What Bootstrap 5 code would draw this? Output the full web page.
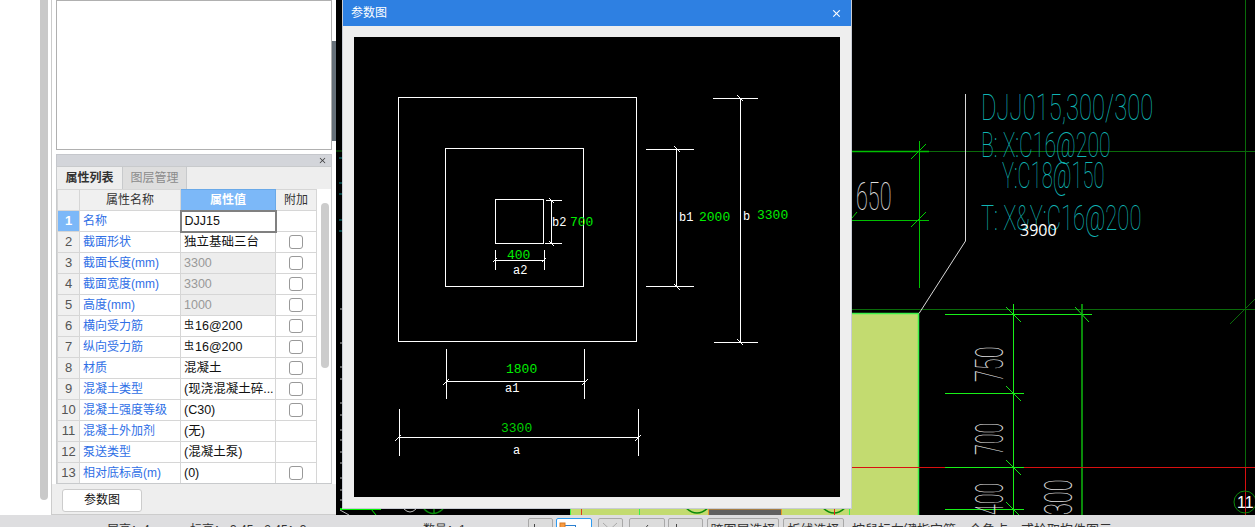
<!DOCTYPE html>
<html lang="zh">
<head>
<meta charset="utf-8">
<title>参数图</title>
<link href="https://cdn.jsdelivr.net/npm/bootstrap@5.3.0/dist/css/bootstrap.min.css" rel="stylesheet">
<style>
html,body{height:527px;overflow:hidden;background:#000}
body{font:12px/1.2 "Liberation Sans","Noto Sans CJK SC",sans-serif;color:#222}
.app-top{height:515px}
.blank-col{width:40px;background:#fff}
.thumb-col{width:12px;background:#fff;border-right:1px solid #ccc}
.thumb-bar{width:8px;height:500px;background:#c9c9c9;border-radius:0 0 4px 4px}
.side-panel{width:284px;background:#fff;border-bottom:1px solid #ccc}
.top-box{height:150px;background:#fff;border:1px solid #b0b0b0;margin:0 0 0 4px;width:276px}
.split-handle{position:absolute;left:280px;top:41px;width:4px;height:100px;background:#667079}
.side-inner{height:150px;margin-bottom:4px}
.prop-head{height:12px;background:#d3d5da;border:1px solid #c5c7cc;border-bottom:0}
.prop-head .btn-close{font-size:7px;padding:0;opacity:.7;margin-right:5px}
.tabs-row{height:23px;background:#eee;border:1px solid #c8cacc;border-width:1px 1px 0}
.tab-on,.tab-off{width:65px;line-height:22px;text-align:center;font-size:12px}
.tab-on{color:#333;font-weight:600;background:#eee}
.tab-off{color:#8b8b8b;background:#dedede;border:solid #c8cacc;border-width:0 1px}
.grid-area{height:295px;overflow:hidden;border:solid #c8cacc;border-width:0 1px 1px;background:#fff;align-items:flex-start}
.grid-scroll{width:15px;background:#fff;padding-left:4px}
.grid-thumb{width:8px;height:165px;margin-top:14px;background:#ccc;border-radius:4px}
.prop-table{width:259px;table-layout:fixed;margin:0;font-size:12px;--bs-table-border-color:#d6d6d6;--bs-border-color:#d6d6d6}
.prop-table tr{height:21px}
.prop-table td,.prop-table th{padding:0 3px;height:21px;line-height:16px;font-weight:400;white-space:nowrap;overflow:hidden;vertical-align:middle;border:1px solid #d6d6d6}
.prop-table th{background:#f0f0f0;text-align:center;color:#333}
.prop-table .head-sel{background:#7cb8f8;color:#fff;font-weight:600;border-color:#6aa9e8}
.prop-table .num-cell{background:#f0f0f0;text-align:center;padding:0;color:#555;font-size:13px}
.prop-table .num-sel{background:#7cb8f8;color:#fff;font-weight:700}
.prop-table .name-cell{color:#2f6fe6}
.prop-table .chk-cell{padding:0}
.prop-table .val-cell{color:#111;padding-left:3px;font-size:12.500px}
.prop-table .val-off{background:#ededed;color:#999}
.prop-table .val-sel{border:2px solid #808080;padding-left:3px;color:#111}
.rebar-sym{font-size:10px;position:relative;top:-2px;margin-right:1px}
.chk-box{width:14px;height:14px;margin:-1px auto 0;border:1px solid #999;border-radius:3px;display:block;background:#fff}
.bottom-bar{height:30px;background:#eee;padding:5px 0 0 10px}
.param-btn{width:80px;height:23px;padding:0;font-size:12px;line-height:21px;background:#fff;border:1px solid #ccc;border-radius:3px;color:#111}
.cad-stage{width:919px;height:515px;background:#000}
.cad-stage>svg{display:block}
.param-dialog{position:absolute;left:6px;top:0;width:510px;height:509px;background:#eee;border:0;border-left:1px solid #c8ccd4;border-right:1px solid #c8ccd4;border-bottom:1px solid #c8ccd4;border-radius:0}
.param-dialog .param-title{flex:none;height:26px;background:#2e80e2;color:#fff;padding:0 10px 0 8px;font-size:12px;border-radius:0;border:0}
.param-title .btn-close{font-size:9px;padding:0;opacity:1}
.param-body{padding:11px}
.param-body svg{display:block;width:486px;height:460px;background:#000}
.status-bar{height:12px;background:#dedee0;overflow:hidden;padding-left:107px;font-size:12px;line-height:14px;color:#333}
.st-text{margin-top:8px;white-space:nowrap}
.st-btn{height:22px;margin-top:3px;background:#dcdcdc;border:1px solid #a8a8a8;border-radius:2px;padding:0;font-size:13px;line-height:20px;color:#333;text-align:center;flex:none;display:block}
.st-btn.on{background:#fff;border:1px solid #2e9bf0}
.st-lbl{padding-top:1px}
.w25{width:25px}.w36{width:36px}.w35{width:35px}.w72{width:72px}.w61{width:61px}
.gap3{margin-left:3px}.gap6{margin-left:6px}.gap4{margin-left:4px}
.t-g{fill:#00f000;font:13px "Liberation Mono",monospace}
.t-g2{fill:#00d000;font:13px "Liberation Mono",monospace}
.t-w{fill:#fff;font:12px "Liberation Mono",monospace}
.cad-note{fill:#10b4b4;font:100 36px Roboto,"Liberation Sans",sans-serif}
.cad-dim{fill:#e0e0e0;font:100 38px Roboto,"Liberation Sans",sans-serif}
</style>
</head>
<body>
<div class="d-flex flex-column">
  <div class="d-flex app-top">
    <div class="blank-col flex-shrink-0"></div>
    <div class="thumb-col flex-shrink-0"><div class="thumb-bar"></div></div>
    <div class="side-panel flex-shrink-0 position-relative">
      <div class="side-inner"><div class="top-box"></div></div>
      <div class="split-handle"></div>
      <div class="px-1">
        <div class="prop-head d-flex align-items-center justify-content-end"><button type="button" class="btn-close" aria-label="关闭"></button></div>
        <div class="tabs-row d-flex"><div class="tab-on">属性列表</div><div class="tab-off">图层管理</div></div>
        <div class="grid-area d-flex">
          <table class="table prop-table">
            <colgroup><col style="width:22px"><col style="width:101px"><col style="width:95px"><col style="width:41px"></colgroup>
            <tr><th></th><th>属性名称</th><th class="head-sel">属性值</th><th>附加</th></tr>
            <tr><td class="num-cell num-sel">1</td><td class="name-cell">名称</td><td class="val-cell val-sel">DJJ15</td><td class="chk-cell"></td></tr>
            <tr><td class="num-cell">2</td><td class="name-cell">截面形状</td><td class="val-cell">独立基础三台</td><td class="chk-cell"><span class="chk-box"></span></td></tr>
            <tr><td class="num-cell">3</td><td class="name-cell">截面长度(mm)</td><td class="val-cell val-off">3300</td><td class="chk-cell"><span class="chk-box"></span></td></tr>
            <tr><td class="num-cell">4</td><td class="name-cell">截面宽度(mm)</td><td class="val-cell val-off">3300</td><td class="chk-cell"><span class="chk-box"></span></td></tr>
            <tr><td class="num-cell">5</td><td class="name-cell">高度(mm)</td><td class="val-cell val-off">1000</td><td class="chk-cell"><span class="chk-box"></span></td></tr>
            <tr><td class="num-cell">6</td><td class="name-cell">横向受力筋</td><td class="val-cell"><span class="rebar-sym">虫</span>16@200</td><td class="chk-cell"><span class="chk-box"></span></td></tr>
            <tr><td class="num-cell">7</td><td class="name-cell">纵向受力筋</td><td class="val-cell"><span class="rebar-sym">虫</span>16@200</td><td class="chk-cell"><span class="chk-box"></span></td></tr>
            <tr><td class="num-cell">8</td><td class="name-cell">材质</td><td class="val-cell">混凝土</td><td class="chk-cell"><span class="chk-box"></span></td></tr>
            <tr><td class="num-cell">9</td><td class="name-cell">混凝土类型</td><td class="val-cell">(现浇混凝土碎...</td><td class="chk-cell"><span class="chk-box"></span></td></tr>
            <tr><td class="num-cell">10</td><td class="name-cell">混凝土强度等级</td><td class="val-cell">(C30)</td><td class="chk-cell"><span class="chk-box"></span></td></tr>
            <tr><td class="num-cell">11</td><td class="name-cell">混凝土外加剂</td><td class="val-cell">(无)</td><td class="chk-cell"></td></tr>
            <tr><td class="num-cell">12</td><td class="name-cell">泵送类型</td><td class="val-cell">(混凝土泵)</td><td class="chk-cell"></td></tr>
            <tr><td class="num-cell">13</td><td class="name-cell">相对底标高(m)</td><td class="val-cell">(0)</td><td class="chk-cell"><span class="chk-box"></span></td></tr>
            <tr><td class="num-cell"></td><td></td><td></td><td></td></tr>
          </table>
          <div class="grid-scroll flex-shrink-0"><div class="grid-thumb"></div></div>
        </div>
      </div>
      <div class="bottom-bar"><button type="button" class="btn param-btn">参数图</button></div>
    </div>
    <div class="cad-stage position-relative flex-shrink-0">
      <svg width="919" height="515" viewBox="336 0 919 515" fill="none">
        <path d="M336 151H342" stroke="#0a6a0a"/>
        <path d="M339 158H342M339 183H342M339 194H342M339 220H342M339 231H342" stroke="#0a8a8a"/>
        <path d="M340 309H342M340 343H342M340 367H342M340 379H342M340 403H342M340 415H342M340 430H342M340 440H342M340 452H342M340 463H342M340 478H342M340 490H342M340 500H342" stroke="#bbb"/>
        <path d="M340 509H381" stroke="#00f000" stroke-width="2"/>
        <path d="M371 509L376 515" stroke="#00f000"/>
        <path d="M340 510L349 515" stroke="#bbb"/>
        <path d="M404 509Q410 515 416 509" stroke="#bbb"/>
        <path d="M424 509Q433 518 443 509M434 509V513" stroke="#0a8a0a" stroke-width="1.500"/>
        <rect x="570" y="508" width="348" height="7" fill="#c3db70"/>
        <rect x="852" y="314" width="66" height="201" fill="#c3db70"/>
        <path d="M852 313.500H919M918.500 314V515" stroke="#3cf04a" stroke-width="1.500"/>
        <path d="M570.500 508V515M639.500 508V515M849.500 508V515" stroke="#3cf04a"/>
        <path d="M581.500 508V515" stroke="#e03a20"/>
        <path d="M686 508Q697 518 708 508" stroke="#0a8a0a" stroke-width="1.500"/>
        <path d="M823 508Q834 518 845 508" stroke="#0a8a0a" stroke-width="1.500"/>
        <path d="M834.500 508V515" stroke="#e0281c"/>
        <rect x="708" y="509" width="74" height="6" fill="#606060"/>
        <path d="M708 509H782M708.500 509V515M781.500 509V515" stroke="#e89a2a"/>
        <path d="M852 151.500H929" stroke="#00c000" stroke-width="1.500"/>
        <path d="M929 151.500H1255M852 309.500H1255M1245.500 0V467" stroke="#0a6a0a"/>
        <path d="M852 220.500H929" stroke="#00c000"/>
        <path d="M919.500 141V288" stroke="#00c000"/>
        <path d="M911 159L926 144M911 227L926 212M852 218L857 212" stroke="#00d000"/>
        <path d="M1230 324L1255 299" stroke="#0a6a0a"/>
        <path d="M945 314.500H1092M1013.500 304V515M945 393.500H1024M945 467.500H1024M945 509.500H1024" stroke="#18f018"/>
        <path d="M1082 304V515" stroke="#0a8a0a" stroke-width="2"/>
        <path d="M1006 307L1021 322M1075 307L1089 322M1006 386L1021 401M1006 460L1021 475M1006 502L1019 515" stroke="#18e018"/>
        <path d="M852 467.500H945M1024 467.500H1255M1245.500 467.500V515" stroke="#d81010"/>
        <path d="M965.500 94V241L919 313.500" stroke="#d8d8d8"/>
        <text class="cad-note" transform="translate(981 120) scale(.66 1)">DJJ015,300/300</text>
        <text class="cad-note" transform="translate(981 157) scale(.59 1)">B: X:C16@200</text>
        <text class="cad-note" transform="translate(1002 188) scale(.56 1)">Y:C18@150</text>
        <text class="cad-note" transform="translate(981 230) scale(.61 1)">T: X&amp;Y:C16@200</text>
        <text x="1020" y="236" fill="#fff" font-size="16" font-family="Open Sans,sans-serif">3900</text>
        <text class="cad-dim" transform="translate(856 210) scale(.57 1)">650</text>
        <text class="cad-dim" transform="translate(1003 382) rotate(-90) scale(.57 1)">750</text>
        <text class="cad-dim" transform="translate(1003 455) rotate(-90) scale(.52 1)">700</text>
        <text class="cad-dim" transform="translate(1003 515) rotate(-90) scale(.52 1)">400</text>
        <text class="cad-dim" transform="translate(1072 515) rotate(-90) scale(.57 1)">300</text>
        <circle cx="1245" cy="502" r="11" stroke="#0a8a0a"/>
        <text x="1237" y="508" fill="#fff" font-size="16" font-family="Liberation Sans">11</text>
      </svg>
      <div class="card param-dialog">
        <div class="card-header param-title d-flex align-items-center justify-content-between"><span>参数图</span><button type="button" class="btn-close btn-close-white" aria-label="关闭"></button></div>
        <div class="param-body">
          <svg viewBox="354 37 486 460" fill="none" stroke="#fff">
            <rect x="398.500" y="97.500" width="238" height="244"/>
            <rect x="445.500" y="148.500" width="138" height="138"/>
            <rect x="495.500" y="199.500" width="48" height="44"/>
            <path d="M546 200.500H562M545 243.500H562M551.500 200V243M549 198L554 203M549 241L554 246"/>
            <path d="M495.500 250V270M544.500 250V270M495 260.500H544M493 262L497 258M542 262L546 258"/>
            <path d="M646 149.500H694M646 286.500H694M676.500 149V286M674 146L680 152M674 284L680 290"/>
            <path d="M713 98.500H758M714 342.500H758M740.500 98V342M737 95L743 101M737 339L743 345"/>
            <path d="M446.500 349V399M584.500 349V399M447 381.500H584M443 385L449 379M582 385L588 379"/>
            <path d="M399.500 409V456M638.500 409V456M400 437.500H638M395 441L401 435M635 441L641 435"/>
            <g stroke="none">
              <text class="t-w" x="552" y="226">b2</text>
              <text class="t-g" x="570" y="226">700</text>
              <text class="t-g" x="507" y="259">400</text>
              <text class="t-w" x="513" y="274">a2</text>
              <text class="t-w" x="679" y="221">b1</text>
              <text class="t-g" x="699" y="221">2000</text>
              <text class="t-w" x="743" y="220">b</text>
              <text class="t-g" x="757" y="219">3300</text>
              <text class="t-g" x="506" y="373">1800</text>
              <text class="t-w" x="505" y="392">a1</text>
              <text class="t-g2" x="501" y="432">3300</text>
              <text class="t-w" x="513" y="454">a</text>
            </g>
          </svg>
        </div>
      </div>
    </div>
  </div>
  <div class="status-bar d-flex">
    <span class="st-text" style="width:83px">层高：4</span>
    <span class="st-text" style="width:233px">标高：-3.45~-2.45：3</span>
    <span class="st-text" style="width:105px">数量：1</span>
    <span class="st-btn w25"><svg width="23" height="20" fill="none" stroke="#444"><path d="M5.500 4V20"/></svg></span>
    <span class="st-btn on w36 gap3"><svg width="34" height="20" fill="none"><rect x="6.500" y="5.500" width="12" height="14" stroke="#2a7fd0"/><rect x="3" y="3" width="5" height="5" fill="#f89a40" stroke="#d87820"/></svg></span>
    <span class="st-btn w25 gap6"><svg width="23" height="20" fill="none" stroke="#aaa"><path d="M4 3L18 16M18 3L4 16"/></svg></span>
    <span class="st-btn w36 gap6"><svg width="33" height="20" fill="none" stroke="#444"><path d="M12 11L17 5"/></svg></span>
    <span class="st-btn w35 gap3"><svg width="33" height="20" fill="none" stroke="#444"><path d="M7.500 4V20"/></svg></span>
    <span class="st-btn w72 gap4"><span class="st-lbl d-block">跨图层选择</span></span>
    <span class="st-btn w61 gap4"><span class="st-lbl d-block">折线选择</span></span>
    <span class="st-text ms-2" style="font-size:13px">按鼠标左键指定第一个角点，或拾取构件图元</span>
  </div>
</div>
</body>
</html>
